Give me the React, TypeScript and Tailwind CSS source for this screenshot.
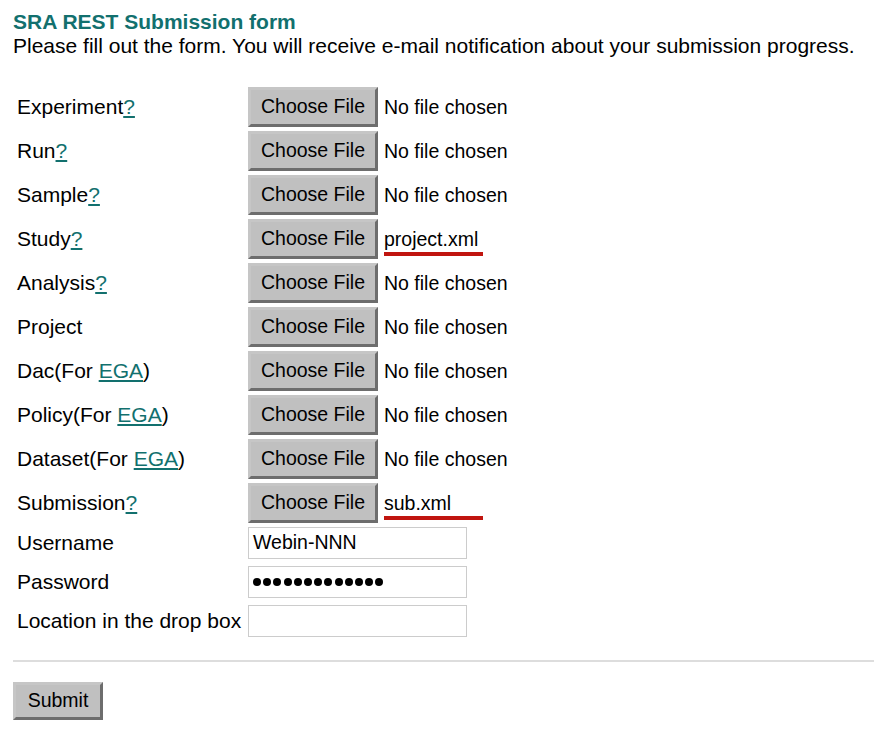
const teal = "text-[#12706e]";

type FileRow = {
  label: React.ReactNode;
  file?: string;
};

function Help() {
  return <a href="#" className={`${teal} underline underline-offset-2`}>?</a>;
}

function Ega() {
  return <a href="#" className={`${teal} underline underline-offset-2`}>EGA</a>;
}

const rows: FileRow[] = [
  { label: <>Experiment<Help /></> },
  { label: <>Run<Help /></> },
  { label: <>Sample<Help /></> },
  { label: <>Study<Help /></>, file: "project.xml" },
  { label: <>Analysis<Help /></> },
  { label: <>Project</> },
  { label: <>Dac(For <Ega />)</> },
  { label: <>Policy(For <Ega />)</> },
  { label: <>Dataset(For <Ega />)</> },
  { label: <>Submission<Help /></>, file: "sub.xml" },
];

function ChooseFile({ file }: { file?: string }) {
  return (
    <div className="flex items-center">
      <button
        type="button"
        className="h-[40px] w-[130px] bg-[#c0c0c0] border-[3px] border-t-[#c6c6c6] border-l-[#c6c6c6] border-b-[#6d6d6d] border-r-[#6d6d6d] text-[19.5px] text-black leading-none"
      >
        Choose File
      </button>
      {file ? (
        <span className="relative ml-[6px] text-[19.5px] leading-[22px]">
          {file}
          <span className="absolute left-0 top-[24px] h-[4px] w-[99px] bg-[#c0150f]" />
        </span>
      ) : (
        <span className="ml-[6px] text-[19.5px] leading-[22px]">No file chosen</span>
      )}
    </div>
  );
}

function TextField({ value, password }: { value?: string; password?: boolean }) {
  return (
    <div className="h-[32px] w-[219px] border border-[#cccccc] bg-white px-[4px] flex items-center text-[19.5px] leading-none">
      {password ? (
        <span className="flex gap-[2.2px]">
          {Array.from({ length: 13 }).map((_, i) => (
            <span key={i} className="block h-[8px] w-[8px] rounded-full bg-black" />
          ))}
        </span>
      ) : (
        value
      )}
    </div>
  );
}

export default function App() {
  return (
    <div
      className="min-h-[740px] bg-white pl-[13px] pt-[10px] text-black"
      style={{ fontFamily: '"Liberation Sans", Arial, sans-serif' }}
    >
      <h1 className={`text-[21px] font-bold leading-[24px] ${teal}`}>SRA REST Submission form</h1>
      <p className="text-[21px] leading-[24px] whitespace-nowrap">
        Please fill out the form. You will receive e-mail notification about your submission progress.
      </p>

      <form className="mt-[27px]" onSubmit={(e) => e.preventDefault()}>
        <div className="grid grid-cols-[235px_1fr]">
          {rows.map((r, i) => (
            <div key={i} className="contents">
              <div className="h-[44px] flex items-center pl-[4px] text-[21px] leading-[24px]">
                <span>{r.label}</span>
              </div>
              <div className="h-[44px] flex items-center">
                <ChooseFile file={r.file} />
              </div>
            </div>
          ))}
        </div>

        <div className="mt-[2px] grid grid-cols-[235px_1fr] gap-y-[7px]">
          <div className="h-[32px] flex items-center pl-[4px] text-[21px]">Username</div>
          <TextField value="Webin-NNN" />
          <div className="h-[32px] flex items-center pl-[4px] text-[21px]">Password</div>
          <TextField password />
          <div className="h-[32px] flex items-center pl-[4px] text-[21px] whitespace-nowrap">Location in the drop box</div>
          <TextField />
        </div>

        <hr className="mt-[23px] border-0 h-[2px] bg-[#dddddd]" />

        <button
          type="submit"
          className="mt-[20px] h-[38px] w-[90px] bg-[#c0c0c0] border-[3px] border-t-[#c6c6c6] border-l-[#c6c6c6] border-b-[#6d6d6d] border-r-[#6d6d6d] text-[19.5px] leading-none"
        >
          Submit
        </button>
      </form>
    </div>
  );
}
